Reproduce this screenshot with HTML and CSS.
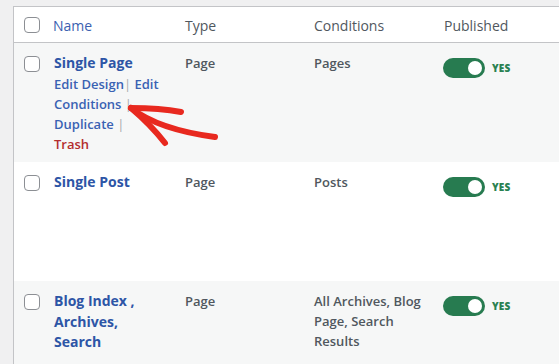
FILE: index.html
```html
<!DOCTYPE html>
<html>
<head>
<meta charset="utf-8">
<link rel="stylesheet" href="styles.css">
</head>
<body>
<div class="page">
  <div class="table">
    <div class="row head">
      <div class="cell check"><span class="box"></span></div>
      <div class="cell name"><a class="sort">Name</a></div>
      <div class="cell">Type</div>
      <div class="cell">Conditions</div>
      <div class="cell">Published</div>
    </div>
    <div class="row alt">
      <div class="cell check"><span class="box"></span></div>
      <div class="cell name">
        <a class="title">Single Page</a>
        <div class="actions">
          <a>Edit Design</a><span class="sep">|</span> <a>Edit Conditions</a> <span class="sep">|</span> <a>Duplicate</a> <span class="sep">|</span> <a class="trash">Trash</a>
        </div>
      </div>
      <div class="cell text">Page</div>
      <div class="cell text">Pages</div>
      <div class="cell pub"><span class="toggle"><span class="knob"></span></span><span class="yes">YES</span></div>
    </div>
    <div class="row">
      <div class="cell check"><span class="box"></span></div>
      <div class="cell name">
        <a class="title">Single Post</a>
        <div class="actions hidden">
          <a>Edit Design</a><span class="sep">|</span> <a>Edit Conditions</a> <span class="sep">|</span> <a>Duplicate</a> <span class="sep">|</span> <a class="trash">Trash</a>
        </div>
      </div>
      <div class="cell text">Page</div>
      <div class="cell text">Posts</div>
      <div class="cell pub"><span class="toggle"><span class="knob"></span></span><span class="yes">YES</span></div>
    </div>
    <div class="row alt">
      <div class="cell check"><span class="box"></span></div>
      <div class="cell name">
        <a class="title">Blog Index , Archives, Search</a>
      </div>
      <div class="cell text">Page</div>
      <div class="cell text">All Archives, Blog Page, Search Results</div>
      <div class="cell pub"><span class="toggle"><span class="knob"></span></span><span class="yes">YES</span></div>
    </div>
  </div>
  <svg class="arrow" width="559" height="364" viewBox="0 0 559 364">
    <g fill="none" stroke="#e8291f" stroke-width="6" stroke-linecap="round" stroke-linejoin="round">
      <path d="M131 108 Q160 108 181 112"/>
      <path d="M131 108 C145 119 170 131 215 137"/>
      <path d="M131 108 Q151 125 165 143"/>
    </g>
  </svg>
</div>
</body>
</html>
```
FILE: styles.css
```css
html, body {
  margin: 0;
  padding: 0;
  background: #f0f0f1;
  overflow: hidden;
}
body {
  font-family: "Open Sans", "Noto Sans", sans-serif;
  width: 559px;
  height: 364px;
}
.page {
  position: relative;
  width: 559px;
  height: 364px;
  padding: 6px 0 0 13px;
  box-sizing: border-box;
}
.table {
  width: 620px;
  border-top: 1px solid #c3c4c7;
  border-left: 1px solid #c3c4c7;
  background: #fff;
}
.row {
  display: grid;
  grid-template-columns: 40px 131px 129px 130px 1fr;
  background: #fff;
}
.row.alt {
  background: #f6f7f7;
}
.row.head {
  height: 36px;
  box-sizing: border-box;
  padding-top: 2px;
  border-bottom: 1px solid #c3c4c7;
  align-items: center;
  font-size: 14px;
  color: #50575e;
  line-height: 20px;
}
.row:not(.head) {
  padding: 10px 0 8px;
  min-height: 101px;
}
.cell {
  padding-right: 11px;
}
.name {
  padding-right: 24px;
}
.check {
  padding-left: 10px;
}
.box {
  display: block;
  width: 16px;
  height: 16px;
  box-sizing: border-box;
  border: 1px solid #8c8f94;
  border-radius: 4px;
  background: #fff;
}
.row.head .check {
  margin-top: -2px;
}
.row:not(.head) .check {
  padding-top: 3px;
}
.sort {
  color: #3b5fb0;
  margin-left: -1px;
}
.title {
  display: block;
  font-size: 14px;
  font-weight: 700;
  color: #2d55a6;
  line-height: 20.5px;
}
.actions {
  font-size: 13px;
  font-weight: 600;
  line-height: 20px;
  color: #3a62b3;
}
.actions.hidden {
  visibility: hidden;
}
.sep {
  color: #a7aaad;
  font-weight: 400;
}
.trash {
  color: #b32d2e;
}
.text {
  font-size: 13px;
  line-height: 20px;
  color: #50575e;
  font-weight: 600;
}
.pub {
  display: flex;
  align-items: center;
  align-self: start;
  margin-top: 5px;
  margin-left: -1px;
}
.toggle {
  display: block;
  position: relative;
  width: 42px;
  height: 20px;
  border-radius: 10px;
  background: #277b50;
}
.knob {
  position: absolute;
  right: 3px;
  top: 3px;
  width: 14px;
  height: 14px;
  border-radius: 50%;
  background: #fff;
}
.yes {
  margin-left: 7px;
  font-size: 10px;
  font-weight: 800;
  color: #2a8151;
  letter-spacing: 0.2px;
}
.arrow {
  position: absolute;
  left: 0;
  top: 0;
  pointer-events: none;
}
```
